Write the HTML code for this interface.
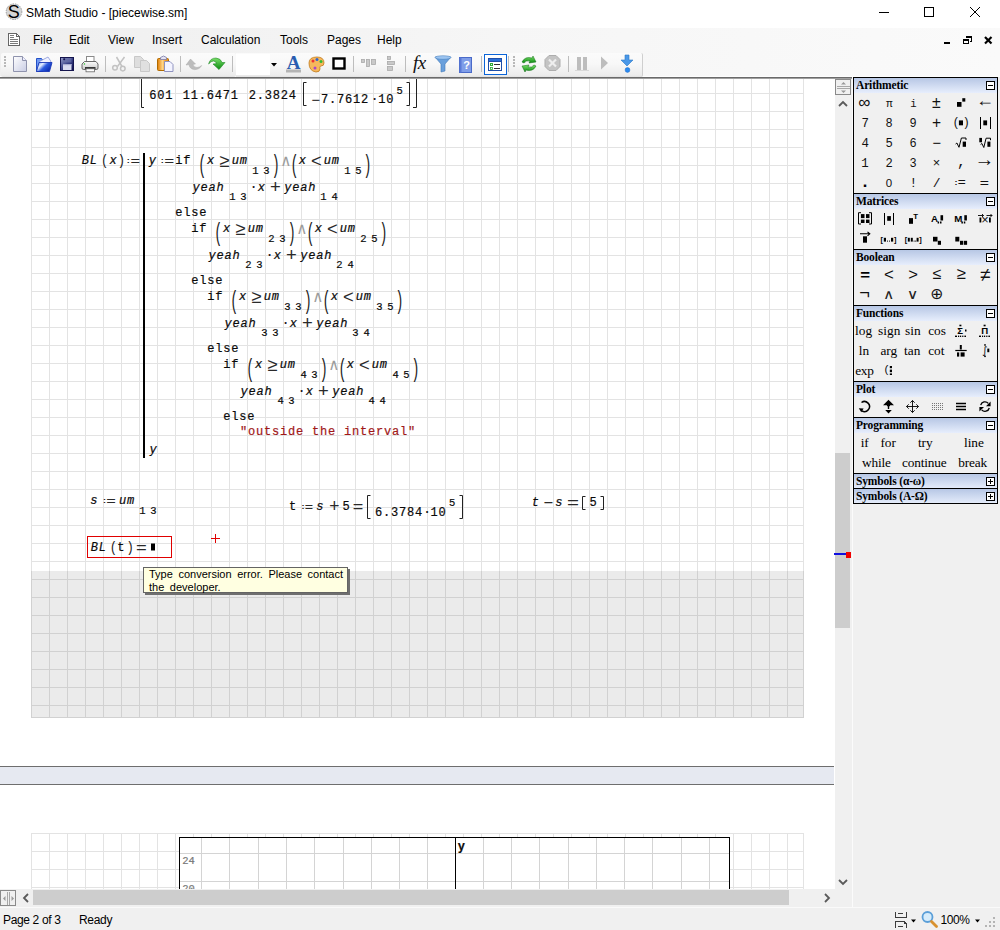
<!DOCTYPE html>
<html><head><meta charset="utf-8"><title>SMath Studio - [piecewise.sm]</title>
<style>
html,body{margin:0;padding:0}
body{width:1000px;height:930px;position:relative;overflow:hidden;background:#fff;font-family:"Liberation Sans",sans-serif;font-size:12px;color:#000}
.a{position:absolute}
.t{position:absolute;white-space:pre;line-height:16px}
svg{position:absolute;left:0;top:0;overflow:visible}
.m{font-family:"Liberation Mono",monospace;font-size:13.33px}
.mi{font-family:"Liberation Mono",monospace;font-size:13.33px;font-style:italic}
.s{font-family:"Liberation Mono",monospace;font-size:10px}
.hd{font-family:"Liberation Serif",serif;font-weight:bold;font-size:11px}
.fn{font-family:"Liberation Serif",serif;font-size:13.33px}
</style></head><body>
<div class="a" id="titlebar" style="left:0;top:0;width:1000px;height:28px;background:#fff"></div>
<svg width="28" height="28"><circle cx="14" cy="11.700" r="7.800" fill="#d6d6d6" stroke="#9a9a9a" stroke-width="1" stroke-dasharray="1.500 1"/><text x="13.800" y="18.400" text-anchor="middle" font-family="Liberation Sans,sans-serif" font-size="18" fill="#000">S</text></svg>
<div class="t" style="left:26px;top:5px;font-size:12px;line-height:16px">SMath Studio - [piecewise.sm]</div>
<svg width="1000" height="28"><g stroke="#000" stroke-width="1" fill="none" shape-rendering="crispEdges"><line x1="879" y1="12.500" x2="889" y2="12.500"/><rect x="924.500" y="7.500" width="9" height="9"/></g><g stroke="#000" stroke-width="1"><line x1="970" y1="7" x2="980" y2="17"/><line x1="980" y1="7" x2="970" y2="17"/></g></svg>
<div class="a" id="menubar" style="left:0;top:28px;width:1000px;height:49px;background:linear-gradient(to right,#efefef,#f6f6f6 50%,#fafafa)"></div>
<svg width="30" height="24" style="top:28px"><g shape-rendering="crispEdges" fill="#fff" stroke="#666" stroke-width="1"><path d="M8.500 5.500h8l3 3v9h-11z"/><path d="M16.500 5.500v3h3" fill="none"/></g><g stroke="#7a7a7a" shape-rendering="crispEdges"><line x1="10" y1="7.500" x2="14" y2="7.500"/><line x1="10" y1="9.500" x2="14" y2="9.500"/><line x1="10" y1="11.500" x2="18" y2="11.500"/><line x1="10" y1="13.500" x2="18" y2="13.500"/><line x1="10" y1="15.500" x2="18" y2="15.500"/></g></svg>
<div class="t" style="left:33px;top:32px">File</div>
<div class="t" style="left:69px;top:32px">Edit</div>
<div class="t" style="left:108px;top:32px">View</div>
<div class="t" style="left:152px;top:32px">Insert</div>
<div class="t" style="left:201px;top:32px">Calculation</div>
<div class="t" style="left:280px;top:32px">Tools</div>
<div class="t" style="left:327px;top:32px">Pages</div>
<div class="t" style="left:377px;top:32px">Help</div>
<svg width="1000" height="24" style="top:28px"><g fill="#000" shape-rendering="crispEdges"><rect x="944" y="14" width="6" height="2"/></g>
<g fill="none" stroke="#000" shape-rendering="crispEdges"><path d="M966.500 10V8.500h5v4.500H970"/><line x1="966" y1="8.500" x2="972" y2="8.500" stroke-width="2"/><rect x="963.500" y="11.500" width="5" height="4"/><line x1="963" y1="11.500" x2="969" y2="11.500" stroke-width="2"/></g>
<g stroke="#000" stroke-width="2.200"><line x1="985" y1="9" x2="991.500" y2="15.500"/><line x1="991.500" y1="9" x2="985" y2="15.500"/></g></svg>
<div class="a" id="toolbar" style="left:0;top:76px;width:1000px;height:1px;background:#fdfdfd"></div>
<div class="a" style="left:1px;top:53px;width:235px;height:24px;background:linear-gradient(#fbfbfb,#f8f8f8 45%,#ececec 92%,#e2e2e2);border-radius:2px"></div>
<div class="a" style="left:236px;top:53px;width:274px;height:24px;background:linear-gradient(#fbfbfb,#f8f8f8 45%,#ececec 92%,#e2e2e2)"></div>
<div class="a" style="left:510px;top:53px;width:132px;height:24px;background:linear-gradient(#fbfbfb,#f8f8f8 45%,#ececec 92%,#e2e2e2);border-right:1px solid #cfcfcf;border-radius:0 2px 2px 0"></div>
<div class="a" style="left:236px;top:54px;width:34px;height:21px;background:#fff"></div>
<svg width="1000" height="26" style="top:51px">
<rect x="4" y="5" width="2" height="2" fill="#b8b8b8"/><rect x="4" y="8" width="2" height="2" fill="#b8b8b8"/><rect x="4" y="11" width="2" height="2" fill="#b8b8b8"/><rect x="4" y="14" width="2" height="2" fill="#b8b8b8"/><rect x="513" y="5" width="2" height="2" fill="#b8b8b8"/><rect x="513" y="8" width="2" height="2" fill="#b8b8b8"/><rect x="513" y="11" width="2" height="2" fill="#b8b8b8"/><rect x="513" y="14" width="2" height="2" fill="#b8b8b8"/>
<line x1="105.5" y1="5" x2="105.5" y2="21" stroke="#bdbdbd" shape-rendering="crispEdges"/><line x1="180.5" y1="5" x2="180.5" y2="21" stroke="#bdbdbd" shape-rendering="crispEdges"/><line x1="232.5" y1="5" x2="232.5" y2="21" stroke="#bdbdbd" shape-rendering="crispEdges"/><line x1="353.5" y1="5" x2="353.5" y2="21" stroke="#bdbdbd" shape-rendering="crispEdges"/><line x1="405.5" y1="5" x2="405.5" y2="21" stroke="#bdbdbd" shape-rendering="crispEdges"/><line x1="481.5" y1="5" x2="481.5" y2="21" stroke="#bdbdbd" shape-rendering="crispEdges"/><line x1="508.5" y1="5" x2="508.5" y2="21" stroke="#bdbdbd" shape-rendering="crispEdges"/><line x1="568.5" y1="5" x2="568.5" y2="21" stroke="#bdbdbd" shape-rendering="crispEdges"/>
<defs><linearGradient id="gdoc" x1="0" y1="0" x2="1" y2="1"><stop offset="0" stop-color="#fff"/><stop offset="1" stop-color="#c9cde4"/></linearGradient><linearGradient id="gblue" x1="0" y1="0" x2="0" y2="1"><stop offset="0" stop-color="#a9cbff"/><stop offset="1" stop-color="#1448c8"/></linearGradient><linearGradient id="gor" x1="0" y1="0" x2="0" y2="1"><stop offset="0" stop-color="#ffd27a"/><stop offset="1" stop-color="#e07a00"/></linearGradient><linearGradient id="ggr" x1="0" y1="0" x2="0" y2="1"><stop offset="0" stop-color="#7be06a"/><stop offset="1" stop-color="#0a8a10"/></linearGradient></defs>
<path d="M13.5 5.5h9l4 4v11h-13z" fill="url(#gdoc)" stroke="#8f93ad"/><path d="M22.5 5.5v4h4" fill="#eef" stroke="#8f93ad"/>
<defs><linearGradient id="gfl" x1="0" y1="0" x2="1" y2="0.6"><stop offset="0" stop-color="#5f8df0"/><stop offset="0.35" stop-color="#e6efff"/><stop offset="0.6" stop-color="#2a5ae0"/><stop offset="1" stop-color="#0c2cb0"/></linearGradient><linearGradient id="gsv" x1="0" y1="0" x2="1" y2="1"><stop offset="0" stop-color="#9aa2cc"/><stop offset="0.5" stop-color="#3a4288"/><stop offset="1" stop-color="#0c0c48"/></linearGradient><linearGradient id="gpr" x1="0" y1="0" x2="0" y2="1"><stop offset="0" stop-color="#fdfdfd"/><stop offset="1" stop-color="#c9c9c9"/></linearGradient></defs><path d="M36.500 7.500h5l1.500 2v11h-6.500z" fill="#6f9af2" stroke="#2450c8"/><path d="M39.500 10.500l8.500-4.500 3 4.500-9 6z" fill="#f0f2ff" stroke="#8a98d8" stroke-width=".8"/><path d="M39 11.500h13l-2.500 9h-13z" fill="url(#gfl)" stroke="#1838b8" stroke-width=".9"/>
<rect x="60.500" y="6.500" width="13" height="13" fill="url(#gsv)" stroke="#15154e"/><rect x="63" y="7" width="8.500" height="4.500" fill="#6a72aa" opacity=".75"/><circle cx="64.200" cy="8.300" r="1" fill="#15154e"/><rect x="63" y="13" width="8.500" height="6" fill="#d9dbf0"/><rect x="63" y="13" width="8.500" height="1.200" fill="#a8acd0"/>
<rect x="86.500" y="5.500" width="7.500" height="6" fill="#fff" stroke="#8a8a8a"/><path d="M84.500 10.500h11.500l2 2.500v4q0 1.500-1.500 1.500h-13q-1.500 0-1.500-1.500v-4z" fill="url(#gpr)" stroke="#5a5a5a" stroke-width=".9"/><rect x="85" y="16.200" width="10.500" height="1.600" fill="#111"/><rect x="86" y="17.800" width="8.500" height="3" fill="#fff" stroke="#666" stroke-width=".8"/><rect x="83.800" y="12.300" width="1.300" height="1.300" fill="#2fbf2f"/>
<g stroke="#c2c2c2" stroke-width="1.500" fill="none"><line x1="116.500" y1="6" x2="122" y2="15.500"/><line x1="124.500" y1="6" x2="117.500" y2="15.500"/><circle cx="115" cy="16.800" r="2.300"/><circle cx="122.800" cy="17.600" r="2.300"/></g>
<path d="M134.500 5.500h6l3 3v8h-9z" fill="#dedede" stroke="#c8c8c8"/><path d="M140.500 9.500h6l3 3v8h-9z" fill="#e0e0e0" stroke="#c8c8c8"/>
<defs><linearGradient id="gps" x1="0" y1="0" x2="1" y2="0"><stop offset="0" stop-color="#e07c00"/><stop offset="0.45" stop-color="#ffd58a"/><stop offset="0.7" stop-color="#f2a02c"/><stop offset="1" stop-color="#e88a10"/></linearGradient></defs><rect x="157.500" y="7.500" width="11" height="12" rx="1" fill="url(#gps)" stroke="#b06a00"/><path d="M160.500 8.500v-2q3-3 6 0v2z" fill="#e4e4f2" stroke="#7a7aa8" stroke-width=".8"/><path d="M164.500 10.500h5.500l3 3v7h-8.500z" fill="#f3f3ff" stroke="#8f93c0"/>
<path d="M190.500 8L195.500 13L193 13.300Q193.500 16.500 197 16.500Q199.500 16.300 201.700 14.500Q199.500 18.600 194.500 18.600Q189.500 18 189 13.600L186 14Z" fill="#bcbcbc" stroke="#a8a8a8" stroke-width=".5"/>
<path d="M208.600 13Q210 7 216 7Q221 7.500 222 11.500L225 11.500L219 18.600L213 13L216.600 12.600Q215.500 10 213.500 10Q211 10 208.600 13Z" fill="url(#ggr)" stroke="#0a7a10" stroke-width=".5"/>
<path d="M271 12h6l-3 3.500z" fill="#000"/>
<text x="293.500" y="17.500" text-anchor="middle" font-family="Liberation Serif,serif" font-weight="bold" font-size="19" fill="#2a5db0">A</text><rect x="286" y="18.500" width="15" height="3" fill="#b4b4b4"/>
<path d="M309 12q0-6 8-6q7 0 7 6q0 3-3 3q-2 0-1 3q0 3-4 3q-7-1-7-9z" fill="#f6b85c" stroke="#c07818" stroke-width=".8"/><circle cx="313" cy="10" r="1.500" fill="#e33"/><circle cx="317" cy="8.500" r="1.500" fill="#36c"/><circle cx="321" cy="10.500" r="1.500" fill="#3b3"/><circle cx="315" cy="17" r="1.500" fill="#a4c"/>
<rect x="333.500" y="7.500" width="11" height="10" fill="#fff" stroke="#000" stroke-width="2.400"/>
<g fill="#c9c9c9" stroke="#aaa" stroke-width=".8"><rect x="361.500" y="8.500" width="3" height="3"/><rect x="366.500" y="8.500" width="3" height="7"/><rect x="371.500" y="8.500" width="4" height="5"/><rect x="387.500" y="5.500" width="3" height="3"/><rect x="387.500" y="10.500" width="7" height="3"/><rect x="387.500" y="15.500" width="5" height="4"/></g>
<text x="413" y="18" font-family="Liberation Serif,serif" font-style="italic" font-size="19" fill="#111" letter-spacing="-0.500">fx</text>
<path d="M435 6h16l-6 7v7l-4 1v-8z" fill="#6aa0dc" stroke="#3f78b8" stroke-width=".6"/><ellipse cx="443" cy="6.500" rx="8" ry="1.800" fill="#9cc4f0" stroke="#3f78b8" stroke-width=".5"/>
<rect x="459.500" y="6.500" width="12" height="15" fill="#7f9de8" stroke="#4a6ac8"/><rect x="459.500" y="6.500" width="2" height="15" fill="#5a7ad8"/><text x="466.500" y="18" text-anchor="middle" font-family="Liberation Sans,sans-serif" font-weight="bold" font-size="11" fill="#fff">?</text>
<rect x="484.500" y="3.500" width="22" height="20" fill="#fff" stroke="#0a64d8" stroke-width="1"/><rect x="488.500" y="7.500" width="13" height="12" fill="#fff" stroke="#1f4fa8"/><rect x="488.500" y="7.500" width="13" height="3" fill="#2a6fd8" stroke="#1f4fa8"/><rect x="490.500" y="12.500" width="2" height="2" fill="#cfe" stroke="#3a3"/><rect x="490.500" y="16.500" width="2" height="2" fill="#cfe" stroke="#3a3" stroke-width=".8"/><line x1="494" y1="13.500" x2="500" y2="13.500" stroke="#333"/><line x1="494" y1="17.500" x2="500" y2="17.500" stroke="#333"/>
<g fill="url(#ggr)" stroke="#0a6a10" stroke-width=".5"><path d="M522 11q3-6 10-4l1-2 3 6-7 1 1-2q-4-1-6 2z"/><path d="M536 15q-3 6-10 4l-1 2-3-6 7-1-1 2q4 1 6-2z"/></g>
<path d="M549 4.500h7l4 4v7l-4 4h-7l-4-4v-7z" fill="#c4c4c4" stroke="#adadad"/><g stroke="#eee" stroke-width="2.200"><line x1="549" y1="8.500" x2="556" y2="15.500"/><line x1="556" y1="8.500" x2="549" y2="15.500"/></g>
<rect x="577" y="6" width="4" height="13" fill="#bdbdbd"/><rect x="583" y="6" width="4" height="13" fill="#bdbdbd"/><rect x="575" y="19" width="14" height="1" fill="#d8d8d8"/>
<path d="M601 5.500l7 6.500-7 6.500z" fill="#bdbdbd"/>
<path d="M625 4h4v5h4l-6 6-6-6h4z" fill="#4a98e8" stroke="#2a78c8" stroke-width=".6"/><circle cx="627.500" cy="19" r="2.400" fill="#2a8af0" stroke="#1a68c8" stroke-width=".5"/>
</svg>
<div class="a" style="left:0;top:77px;width:852px;height:1px;background:#6a6a6a"></div><div class="a" style="left:0;top:78px;width:852px;height:1px;background:#a0a0a0"></div>
<div class="a" id="sheet" style="left:0;top:79px;width:835px;height:810px;background:#fff;overflow:hidden">
<div class="a" style="left:31px;top:0;width:772px;height:638px;background-image:linear-gradient(to right,#e3e3e3 1px,transparent 1px),linear-gradient(to bottom,#e3e3e3 1px,transparent 1px);background-size:18px 18px;background-position:0 14px;border-right:1px solid #e3e3e3;border-bottom:1px solid #e3e3e3"></div>
<div class="a" style="left:31px;top:754px;width:772px;height:60px;background-image:linear-gradient(to right,#e3e3e3 1px,transparent 1px),linear-gradient(to bottom,#e3e3e3 1px,transparent 1px);background-size:18px 18px;background-position:0 0;border-right:1px solid #e3e3e3"></div>
<div class="a" style="left:0;top:687px;width:834px;height:17px;background:#e6e9f1;border-top:1px solid #6e6e6e;border-bottom:1px solid #6e6e6e"></div>
<div class="a" style="left:179px;top:758px;width:549px;height:60px;background:#fff;border:1px solid #000;border-width:1px 1px 0 1px"></div>
<svg width="835" height="810" viewBox="0 79 835 810" font-family="Liberation Mono,DejaVu Sans Mono,monospace" fill="#0a0a0a">
<path d="M201.5 838V890M229.5 838V890M258.5 838V890M286.5 838V890M314.5 838V890M343.5 838V890M371.5 838V890M399.5 838V890M427.5 838V890M483.5 838V890M511.5 838V890M539.5 838V890M568.5 838V890M596.5 838V890M624.5 838V890M652.5 838V890M681.5 838V890M709.5 838V890M180 853.5H729M180 881.5H729" stroke="#d4d4d4" fill="none" shape-rendering="crispEdges"/>
<path d="M455.5 838V890" stroke="#000" shape-rendering="crispEdges"/><path d="M179.5 837V890M729.5 837V890M179 837.5H730" stroke="#000" shape-rendering="crispEdges"/>
<text x="457.80" y="850" font-size="12.0" letter-spacing="0.80" stroke="#0a0a0a" stroke-width="0.2" font-weight="bold">y</text>
<text x="182.25" y="864" font-size="10.5" fill="#777" stroke="#777" stroke-width="0.2">24</text><text x="182.25" y="892" font-size="10.5" fill="#777" stroke="#777" stroke-width="0.2">20</text>
<path d="M141.5 79V107.5H144" fill="none" stroke="#222"/><path d="M416.5 79V107.5H413" fill="none" stroke="#222"/>
<text x="149.25" y="98.5" font-size="12.0" letter-spacing="0.80" stroke="#0a0a0a" stroke-width="0.2">601</text><text x="182.75" y="98.5" font-size="12.0" letter-spacing="0.80" stroke="#0a0a0a" stroke-width="0.2">11.6471</text><text x="248.75" y="98.5" font-size="12.0" letter-spacing="0.80" stroke="#0a0a0a" stroke-width="0.2">2.3824</text>
<path d="M306.5 82.5H303.5V105.5H306.5" fill="none" stroke="#222" stroke-width="1"/><path d="M406.5 82.5H409.5V105.5H406.5" fill="none" stroke="#222" stroke-width="1"/><text x="311.46" y="104.50" font-family="Liberation Sans,sans-serif" font-size="14.77" fill="#2a2a2a">−</text><text x="321.00" y="103" font-size="12.0" letter-spacing="0.80" stroke="#0a0a0a" stroke-width="0.2">7.7612</text><text x="371.00" y="103" font-size="12.0" letter-spacing="0.80" stroke="#0a0a0a" stroke-width="0.2">·</text><text x="378.25" y="103" font-size="12.0" letter-spacing="0.80" stroke="#0a0a0a" stroke-width="0.2">10</text><text x="396.55" y="94" font-size="10.5" stroke="#0a0a0a" stroke-width="0.2">5</text>
<text x="81.75" y="164" font-size="12.0" letter-spacing="0.80" font-style="italic" stroke="#0a0a0a" stroke-width="0.2">BL</text><text transform="translate(100.97 164.61) scale(1.015 1.156)" font-size="12.0" fill="#1a1a1a">(</text><text x="109.50" y="164" font-size="12.0" letter-spacing="0.80" font-style="italic" stroke="#0a0a0a" stroke-width="0.2">x</text><text transform="translate(117.67 164.61) scale(1.015 1.156)" font-size="12.0" fill="#1a1a1a">)</text><text transform="translate(126.80 162.95) scale(1 0.8)" font-family="Liberation Sans,sans-serif" font-weight="bold" font-size="9" fill="#111">:</text><text transform="translate(130.48 165.16) scale(1 0.78)" font-family="Liberation Sans,sans-serif" font-size="16.41" fill="#2a2a2a">=</text>
<rect x="143" y="153" width="2" height="305" fill="#000" shape-rendering="crispEdges"/>
<text x="148.80" y="164" font-size="12.0" letter-spacing="0.80" font-style="italic" stroke="#0a0a0a" stroke-width="0.2">y</text><text transform="translate(160.80 162.95) scale(1 0.8)" font-family="Liberation Sans,sans-serif" font-weight="bold" font-size="9" fill="#111">:</text><text transform="translate(164.15 165.32) scale(1 0.78)" font-family="Liberation Sans,sans-serif" font-size="17.03" fill="#2a2a2a">=</text>
<text x="175.25" y="164" font-size="12.0" letter-spacing="0.80" stroke="#0a0a0a" stroke-width="0.2">if</text><text transform="translate(198.28 172.51) scale(1.108 2.116)" font-size="12.0" fill="#1a1a1a">(</text><text x="207.00" y="164.3" font-size="12.0" letter-spacing="0.80" font-style="italic" stroke="#0a0a0a" stroke-width="0.2">x</text><text x="219.34" y="166.52" font-family="Liberation Sans,sans-serif" font-size="18.40" fill="#2a2a2a">≥</text><text x="231.65" y="164.3" font-size="12.0" letter-spacing="0.80" font-style="italic" stroke="#0a0a0a" stroke-width="0.2">um</text><text x="252.25" y="173.5" font-size="10.5" stroke="#0a0a0a" stroke-width="0.2">1</text><text x="263.25" y="173.5" font-size="10.5" stroke="#0a0a0a" stroke-width="0.2">3</text><text transform="translate(271.78 172.51) scale(1.108 2.116)" font-size="12.0" fill="#1a1a1a">)</text><text x="280.95" y="165.90" font-family="DejaVu Sans Mono,monospace" font-size="16.17" fill="#9c9c9c">∧</text><text transform="translate(290.58 172.51) scale(1.108 2.116)" font-size="12.0" fill="#1a1a1a">(</text><text x="298.80" y="164.3" font-size="12.0" letter-spacing="0.80" font-style="italic" stroke="#0a0a0a" stroke-width="0.2">x</text><text x="310.88" y="167.22" font-family="Liberation Sans,sans-serif" font-size="18.46" fill="#2a2a2a">&lt;</text><text x="323.75" y="164.3" font-size="12.0" letter-spacing="0.80" font-style="italic" stroke="#0a0a0a" stroke-width="0.2">um</text><text x="344.25" y="173.5" font-size="10.5" stroke="#0a0a0a" stroke-width="0.2">1</text><text x="355.25" y="173.5" font-size="10.5" stroke="#0a0a0a" stroke-width="0.2">5</text><text transform="translate(363.58 172.51) scale(1.108 2.116)" font-size="12.0" fill="#1a1a1a">)</text>
<text x="192.60" y="191" font-size="12.0" letter-spacing="0.80" font-style="italic" stroke="#0a0a0a" stroke-width="0.2">yeah</text><text x="229.25" y="199.7" font-size="10.5" stroke="#0a0a0a" stroke-width="0.2">1</text><text x="240.25" y="199.7" font-size="10.5" stroke="#0a0a0a" stroke-width="0.2">3</text><text x="250.00" y="191" font-size="12.0" letter-spacing="0.80" stroke="#0a0a0a" stroke-width="0.2">·</text><text x="257.70" y="191" font-size="12.0" letter-spacing="0.80" font-style="italic" stroke="#0a0a0a" stroke-width="0.2">x</text><text x="270.08" y="193.20" font-family="Liberation Sans,sans-serif" font-size="18.46" fill="#2a2a2a">+</text><text x="284.20" y="191" font-size="12.0" letter-spacing="0.80" font-style="italic" stroke="#0a0a0a" stroke-width="0.2">yeah</text><text x="320.25" y="199.7" font-size="10.5" stroke="#0a0a0a" stroke-width="0.2">1</text><text x="331.50" y="199.7" font-size="10.5" stroke="#0a0a0a" stroke-width="0.2">4</text>
<text x="175.25" y="215.6" font-size="12.0" letter-spacing="0.80" stroke="#0a0a0a" stroke-width="0.2">else</text>
<text x="191.25" y="232" font-size="12.0" letter-spacing="0.80" stroke="#0a0a0a" stroke-width="0.2">if</text><text transform="translate(214.28 240.51) scale(1.108 2.116)" font-size="12.0" fill="#1a1a1a">(</text><text x="223.00" y="232.3" font-size="12.0" letter-spacing="0.80" font-style="italic" stroke="#0a0a0a" stroke-width="0.2">x</text><text x="235.34" y="234.52" font-family="Liberation Sans,sans-serif" font-size="18.40" fill="#2a2a2a">≥</text><text x="247.65" y="232.3" font-size="12.0" letter-spacing="0.80" font-style="italic" stroke="#0a0a0a" stroke-width="0.2">um</text><text x="268.25" y="241.5" font-size="10.5" stroke="#0a0a0a" stroke-width="0.2">2</text><text x="279.25" y="241.5" font-size="10.5" stroke="#0a0a0a" stroke-width="0.2">3</text><text transform="translate(287.78 240.51) scale(1.108 2.116)" font-size="12.0" fill="#1a1a1a">)</text><text x="296.95" y="233.90" font-family="DejaVu Sans Mono,monospace" font-size="16.17" fill="#9c9c9c">∧</text><text transform="translate(306.58 240.51) scale(1.108 2.116)" font-size="12.0" fill="#1a1a1a">(</text><text x="314.80" y="232.3" font-size="12.0" letter-spacing="0.80" font-style="italic" stroke="#0a0a0a" stroke-width="0.2">x</text><text x="326.88" y="235.22" font-family="Liberation Sans,sans-serif" font-size="18.46" fill="#2a2a2a">&lt;</text><text x="339.75" y="232.3" font-size="12.0" letter-spacing="0.80" font-style="italic" stroke="#0a0a0a" stroke-width="0.2">um</text><text x="360.25" y="241.5" font-size="10.5" stroke="#0a0a0a" stroke-width="0.2">2</text><text x="371.25" y="241.5" font-size="10.5" stroke="#0a0a0a" stroke-width="0.2">5</text><text transform="translate(379.58 240.51) scale(1.108 2.116)" font-size="12.0" fill="#1a1a1a">)</text>
<text x="208.60" y="259" font-size="12.0" letter-spacing="0.80" font-style="italic" stroke="#0a0a0a" stroke-width="0.2">yeah</text><text x="245.25" y="267.7" font-size="10.5" stroke="#0a0a0a" stroke-width="0.2">2</text><text x="256.25" y="267.7" font-size="10.5" stroke="#0a0a0a" stroke-width="0.2">3</text><text x="266.00" y="259" font-size="12.0" letter-spacing="0.80" stroke="#0a0a0a" stroke-width="0.2">·</text><text x="273.70" y="259" font-size="12.0" letter-spacing="0.80" font-style="italic" stroke="#0a0a0a" stroke-width="0.2">x</text><text x="286.08" y="261.20" font-family="Liberation Sans,sans-serif" font-size="18.46" fill="#2a2a2a">+</text><text x="300.20" y="259" font-size="12.0" letter-spacing="0.80" font-style="italic" stroke="#0a0a0a" stroke-width="0.2">yeah</text><text x="336.25" y="267.7" font-size="10.5" stroke="#0a0a0a" stroke-width="0.2">2</text><text x="347.50" y="267.7" font-size="10.5" stroke="#0a0a0a" stroke-width="0.2">4</text>
<text x="191.25" y="283.6" font-size="12.0" letter-spacing="0.80" stroke="#0a0a0a" stroke-width="0.2">else</text>
<text x="207.25" y="300" font-size="12.0" letter-spacing="0.80" stroke="#0a0a0a" stroke-width="0.2">if</text><text transform="translate(230.28 308.51) scale(1.108 2.116)" font-size="12.0" fill="#1a1a1a">(</text><text x="239.00" y="300.3" font-size="12.0" letter-spacing="0.80" font-style="italic" stroke="#0a0a0a" stroke-width="0.2">x</text><text x="251.34" y="302.52" font-family="Liberation Sans,sans-serif" font-size="18.40" fill="#2a2a2a">≥</text><text x="263.65" y="300.3" font-size="12.0" letter-spacing="0.80" font-style="italic" stroke="#0a0a0a" stroke-width="0.2">um</text><text x="284.25" y="309.5" font-size="10.5" stroke="#0a0a0a" stroke-width="0.2">3</text><text x="295.25" y="309.5" font-size="10.5" stroke="#0a0a0a" stroke-width="0.2">3</text><text transform="translate(303.78 308.51) scale(1.108 2.116)" font-size="12.0" fill="#1a1a1a">)</text><text x="312.95" y="301.90" font-family="DejaVu Sans Mono,monospace" font-size="16.17" fill="#9c9c9c">∧</text><text transform="translate(322.58 308.51) scale(1.108 2.116)" font-size="12.0" fill="#1a1a1a">(</text><text x="330.80" y="300.3" font-size="12.0" letter-spacing="0.80" font-style="italic" stroke="#0a0a0a" stroke-width="0.2">x</text><text x="342.88" y="303.22" font-family="Liberation Sans,sans-serif" font-size="18.46" fill="#2a2a2a">&lt;</text><text x="355.75" y="300.3" font-size="12.0" letter-spacing="0.80" font-style="italic" stroke="#0a0a0a" stroke-width="0.2">um</text><text x="376.25" y="309.5" font-size="10.5" stroke="#0a0a0a" stroke-width="0.2">3</text><text x="387.25" y="309.5" font-size="10.5" stroke="#0a0a0a" stroke-width="0.2">5</text><text transform="translate(395.58 308.51) scale(1.108 2.116)" font-size="12.0" fill="#1a1a1a">)</text>
<text x="224.60" y="327" font-size="12.0" letter-spacing="0.80" font-style="italic" stroke="#0a0a0a" stroke-width="0.2">yeah</text><text x="261.25" y="335.7" font-size="10.5" stroke="#0a0a0a" stroke-width="0.2">3</text><text x="272.25" y="335.7" font-size="10.5" stroke="#0a0a0a" stroke-width="0.2">3</text><text x="282.00" y="327" font-size="12.0" letter-spacing="0.80" stroke="#0a0a0a" stroke-width="0.2">·</text><text x="289.70" y="327" font-size="12.0" letter-spacing="0.80" font-style="italic" stroke="#0a0a0a" stroke-width="0.2">x</text><text x="302.08" y="329.20" font-family="Liberation Sans,sans-serif" font-size="18.46" fill="#2a2a2a">+</text><text x="316.20" y="327" font-size="12.0" letter-spacing="0.80" font-style="italic" stroke="#0a0a0a" stroke-width="0.2">yeah</text><text x="352.25" y="335.7" font-size="10.5" stroke="#0a0a0a" stroke-width="0.2">3</text><text x="363.50" y="335.7" font-size="10.5" stroke="#0a0a0a" stroke-width="0.2">4</text>
<text x="207.25" y="351.6" font-size="12.0" letter-spacing="0.80" stroke="#0a0a0a" stroke-width="0.2">else</text>
<text x="223.25" y="368" font-size="12.0" letter-spacing="0.80" stroke="#0a0a0a" stroke-width="0.2">if</text><text transform="translate(246.28 376.51) scale(1.108 2.116)" font-size="12.0" fill="#1a1a1a">(</text><text x="255.00" y="368.3" font-size="12.0" letter-spacing="0.80" font-style="italic" stroke="#0a0a0a" stroke-width="0.2">x</text><text x="267.34" y="370.52" font-family="Liberation Sans,sans-serif" font-size="18.40" fill="#2a2a2a">≥</text><text x="279.65" y="368.3" font-size="12.0" letter-spacing="0.80" font-style="italic" stroke="#0a0a0a" stroke-width="0.2">um</text><text x="300.50" y="377.5" font-size="10.5" stroke="#0a0a0a" stroke-width="0.2">4</text><text x="311.25" y="377.5" font-size="10.5" stroke="#0a0a0a" stroke-width="0.2">3</text><text transform="translate(319.78 376.51) scale(1.108 2.116)" font-size="12.0" fill="#1a1a1a">)</text><text x="328.95" y="369.90" font-family="DejaVu Sans Mono,monospace" font-size="16.17" fill="#9c9c9c">∧</text><text transform="translate(338.58 376.51) scale(1.108 2.116)" font-size="12.0" fill="#1a1a1a">(</text><text x="346.80" y="368.3" font-size="12.0" letter-spacing="0.80" font-style="italic" stroke="#0a0a0a" stroke-width="0.2">x</text><text x="358.88" y="371.22" font-family="Liberation Sans,sans-serif" font-size="18.46" fill="#2a2a2a">&lt;</text><text x="371.75" y="368.3" font-size="12.0" letter-spacing="0.80" font-style="italic" stroke="#0a0a0a" stroke-width="0.2">um</text><text x="392.50" y="377.5" font-size="10.5" stroke="#0a0a0a" stroke-width="0.2">4</text><text x="403.25" y="377.5" font-size="10.5" stroke="#0a0a0a" stroke-width="0.2">5</text><text transform="translate(411.58 376.51) scale(1.108 2.116)" font-size="12.0" fill="#1a1a1a">)</text>
<text x="240.60" y="395" font-size="12.0" letter-spacing="0.80" font-style="italic" stroke="#0a0a0a" stroke-width="0.2">yeah</text><text x="277.50" y="403.7" font-size="10.5" stroke="#0a0a0a" stroke-width="0.2">4</text><text x="288.25" y="403.7" font-size="10.5" stroke="#0a0a0a" stroke-width="0.2">3</text><text x="298.00" y="395" font-size="12.0" letter-spacing="0.80" stroke="#0a0a0a" stroke-width="0.2">·</text><text x="305.70" y="395" font-size="12.0" letter-spacing="0.80" font-style="italic" stroke="#0a0a0a" stroke-width="0.2">x</text><text x="318.08" y="397.20" font-family="Liberation Sans,sans-serif" font-size="18.46" fill="#2a2a2a">+</text><text x="332.20" y="395" font-size="12.0" letter-spacing="0.80" font-style="italic" stroke="#0a0a0a" stroke-width="0.2">yeah</text><text x="368.50" y="403.7" font-size="10.5" stroke="#0a0a0a" stroke-width="0.2">4</text><text x="379.50" y="403.7" font-size="10.5" stroke="#0a0a0a" stroke-width="0.2">4</text>
<text x="223.25" y="419.6" font-size="12.0" letter-spacing="0.80" stroke="#0a0a0a" stroke-width="0.2">else</text>
<text x="240.10" y="435.4" font-size="12.0" letter-spacing="0.80" fill="#a01818" stroke="#a01818" stroke-width="0.2">&quot;outside the interval&quot;</text>
<text x="149.50" y="453" font-size="12.0" letter-spacing="0.80" font-style="italic" stroke="#0a0a0a" stroke-width="0.2">y</text>
<text x="90.25" y="504.4" font-size="12.0" letter-spacing="0.80" font-style="italic" stroke="#0a0a0a" stroke-width="0.2">s</text><text transform="translate(103.00 503.15) scale(1 0.8)" font-family="Liberation Sans,sans-serif" font-weight="bold" font-size="9" fill="#111">:</text><text transform="translate(106.18 505.36) scale(1 0.78)" font-family="Liberation Sans,sans-serif" font-size="16.41" fill="#2a2a2a">=</text><text x="119.05" y="504.4" font-size="12.0" letter-spacing="0.80" font-style="italic" stroke="#0a0a0a" stroke-width="0.2">um</text><text x="139.25" y="513.6" font-size="10.5" stroke="#0a0a0a" stroke-width="0.2">1</text><text x="150.25" y="513.6" font-size="10.5" stroke="#0a0a0a" stroke-width="0.2">3</text>
<text x="289.00" y="510.4" font-size="12.0" letter-spacing="0.80" stroke="#0a0a0a" stroke-width="0.2">t</text><text transform="translate(301.40 509.15) scale(1 0.8)" font-family="Liberation Sans,sans-serif" font-weight="bold" font-size="9" fill="#111">:</text><text transform="translate(304.78 510.84) scale(1 0.78)" font-family="Liberation Sans,sans-serif" font-size="14.36" fill="#2a2a2a">=</text><text x="316.25" y="510.4" font-size="12.0" letter-spacing="0.80" font-style="italic" stroke="#0a0a0a" stroke-width="0.2">s</text><text x="329.13" y="512.47" font-family="Liberation Sans,sans-serif" font-size="17.44" fill="#2a2a2a">+</text><text x="342.55" y="510.4" font-size="12.0" letter-spacing="0.80" stroke="#0a0a0a" stroke-width="0.2">5</text><text transform="translate(352.70 511.78) scale(1 0.78)" font-family="Liberation Sans,sans-serif" font-size="18.05" fill="#2a2a2a">=</text><path d="M370.5 495.5H367.5V518.5H370.5" fill="none" stroke="#222" stroke-width="1"/><path d="M459.5 495.5H462.5V518.5H459.5" fill="none" stroke="#222" stroke-width="1"/><text x="375.05" y="515.6" font-size="12.0" letter-spacing="0.80" stroke="#0a0a0a" stroke-width="0.2">6.3784</text><text x="423.50" y="515.6" font-size="12.0" letter-spacing="0.80" stroke="#0a0a0a" stroke-width="0.2">·</text><text x="430.55" y="515.6" font-size="12.0" letter-spacing="0.80" stroke="#0a0a0a" stroke-width="0.2">10</text><text x="449.05" y="506.4" font-size="10.5" stroke="#0a0a0a" stroke-width="0.2">5</text>
<text x="531.70" y="505.6" font-size="12.0" letter-spacing="0.80" font-style="italic" stroke="#0a0a0a" stroke-width="0.2">t</text><text x="543.58" y="507.93" font-family="Liberation Sans,sans-serif" font-size="16.41" fill="#2a2a2a">−</text><text x="555.25" y="505.6" font-size="12.0" letter-spacing="0.80" font-style="italic" stroke="#0a0a0a" stroke-width="0.2">s</text><text transform="translate(566.97 507.60) scale(1 0.78)" font-family="Liberation Sans,sans-serif" font-size="20.51" fill="#2a2a2a">=</text><path d="M585.5 496.5H582.5V509.5H585.5" fill="none" stroke="#222" stroke-width="1"/><text x="589.55" y="505.6" font-size="12.0" letter-spacing="0.80" stroke="#0a0a0a" stroke-width="0.2">5</text><path d="M600.5 496.5H603.5V509.5H600.5" fill="none" stroke="#222" stroke-width="1"/>
<rect x="87.5" y="536.5" width="84" height="21" fill="none" stroke="#e00000" shape-rendering="crispEdges"/>
<text x="90.75" y="551" font-size="12.0" letter-spacing="0.80" font-style="italic" stroke="#0a0a0a" stroke-width="0.2">BL</text><text transform="translate(109.77 551.61) scale(1.015 1.156)" font-size="12.0" fill="#1a1a1a">(</text><text x="117.20" y="551" font-size="12.0" letter-spacing="0.80" stroke="#0a0a0a" stroke-width="0.2">t</text><text transform="translate(126.57 551.61) scale(1.015 1.156)" font-size="12.0" fill="#1a1a1a">)</text><text transform="translate(136.08 552.68) scale(1 0.78)" font-family="Liberation Sans,sans-serif" font-size="18.46" fill="#2a2a2a">=</text><rect x="151" y="543.5" width="4" height="7" fill="#000"/>
<path d="M211 538.5H220M215.5 534V543" stroke="#e00000" shape-rendering="crispEdges"/>
</svg>
<div class="a" style="left:31px;top:491.5px;width:773px;height:147.5px;background:rgba(0,0,0,0.078)"></div>
<div class="a" style="left:145px;top:490px;width:205px;height:26px;background:#6f6f6f"></div>
<div class="a" style="left:143px;top:488px;width:203px;height:24px;background:#ffffe1;border:1px solid #646464"></div>
<div class="t" style="left:149px;top:489px;font-size:11px;line-height:13px;word-spacing:2.5px;color:#000">Type conversion error. Please contact</div>
<div class="t" style="left:149px;top:502px;font-size:11px;line-height:13px;word-spacing:2.5px;color:#000">the developer.</div>
</div>
<div class="a" style="left:835px;top:79px;width:17px;height:810px;background:#f0f0f0"></div>
<div class="a" style="left:0;top:889px;width:852px;height:18px;background:#f0f0f0"></div>
<div class="a" style="left:852px;top:77px;width:1px;height:831px;background:#fbfbfb"></div>
<div class="a" style="left:835px;top:453px;width:15px;height:175px;background:#cdcdcd"></div>
<div class="a" style="left:33px;top:890px;width:756px;height:15px;background:#cdcdcd"></div>
<div class="a" style="left:834px;top:553px;width:12px;height:1.5px;background:#1010e0"></div><div class="a" style="left:846px;top:552px;width:5px;height:5.5px;background:#f00000"></div>
<svg width="1000" height="930">
<rect x="835.5" y="79.5" width="15" height="15" fill="#f0f0f0" stroke="#8a8a8a" shape-rendering="crispEdges"/><path d="M837 86.500H850M837 88.500H850" stroke="#a8a8a8" shape-rendering="crispEdges"/><path d="M841 84.500l2.500-2.500 2.500 2.500zM841 90.500l2.500 2.500 2.500-2.500z" fill="#999"/>
<g fill="none" stroke="#5a5a5a" stroke-width="1.800"><path d="M839 106l4-4 4 4"/><path d="M839 880l4 4 4-4"/><path d="M28 894l-4 4 4 4"/><path d="M825 894l4 4-4 4"/></g>
<rect x="0.500" y="890.500" width="15" height="15" fill="#f0f0f0" stroke="#8a8a8a" shape-rendering="crispEdges"/><path d="M7.500 892V905M9.500 892V905" stroke="#a8a8a8" shape-rendering="crispEdges"/><path d="M5.500 896l-2.500 2.500 2.500 2.500zM11.500 896l2.500 2.500-2.500 2.500z" fill="#999"/>
</svg>
<div class="a" id="side" style="left:853px;top:77px;width:147px;height:830px;background:#f0f0f0"></div>
<svg width="1000" height="930" font-family="Liberation Mono,DejaVu Sans Mono,monospace">
<defs><linearGradient id="ph" x1="0" y1="0" x2="0" y2="1"><stop offset="0" stop-color="#b7c7e5"/><stop offset="1" stop-color="#e7eefc"/></linearGradient></defs>
<rect x="854" y="78" width="143" height="15" fill="url(#ph)"/><text x="856" y="89" font-family="Liberation Serif,serif" font-weight="bold" font-size="11.500" letter-spacing="-0.150" fill="#000">Arithmetic</text><rect x="986.500" y="81.5" width="8" height="8" fill="#fff" stroke="#000" shape-rendering="crispEdges"/><path d="M988 85.5H993" stroke="#000" shape-rendering="crispEdges"/>
<rect x="854" y="194" width="143" height="15" fill="url(#ph)"/><text x="856" y="205" font-family="Liberation Serif,serif" font-weight="bold" font-size="11.500" letter-spacing="-0.150" fill="#000">Matrices</text><rect x="986.500" y="197.5" width="8" height="8" fill="#fff" stroke="#000" shape-rendering="crispEdges"/><path d="M988 201.5H993" stroke="#000" shape-rendering="crispEdges"/>
<rect x="854" y="250" width="143" height="15" fill="url(#ph)"/><text x="856" y="261" font-family="Liberation Serif,serif" font-weight="bold" font-size="11.500" letter-spacing="-0.150" fill="#000">Boolean</text><rect x="986.500" y="253.5" width="8" height="8" fill="#fff" stroke="#000" shape-rendering="crispEdges"/><path d="M988 257.5H993" stroke="#000" shape-rendering="crispEdges"/>
<rect x="854" y="306" width="143" height="15" fill="url(#ph)"/><text x="856" y="317" font-family="Liberation Serif,serif" font-weight="bold" font-size="11.500" letter-spacing="-0.150" fill="#000">Functions</text><rect x="986.500" y="309.5" width="8" height="8" fill="#fff" stroke="#000" shape-rendering="crispEdges"/><path d="M988 313.5H993" stroke="#000" shape-rendering="crispEdges"/>
<rect x="854" y="382" width="143" height="15" fill="url(#ph)"/><text x="856" y="393" font-family="Liberation Serif,serif" font-weight="bold" font-size="11.500" letter-spacing="-0.150" fill="#000">Plot</text><rect x="986.500" y="385.5" width="8" height="8" fill="#fff" stroke="#000" shape-rendering="crispEdges"/><path d="M988 389.5H993" stroke="#000" shape-rendering="crispEdges"/>
<rect x="854" y="418" width="143" height="15" fill="url(#ph)"/><text x="856" y="429" font-family="Liberation Serif,serif" font-weight="bold" font-size="11.500" letter-spacing="-0.150" fill="#000">Programming</text><rect x="986.500" y="421.5" width="8" height="8" fill="#fff" stroke="#000" shape-rendering="crispEdges"/><path d="M988 425.5H993" stroke="#000" shape-rendering="crispEdges"/>
<rect x="854" y="474" width="143" height="15" fill="url(#ph)"/><text x="856" y="485" font-family="Liberation Serif,serif" font-weight="bold" font-size="11.500" letter-spacing="-0.150" fill="#000">Symbols (α-ω)</text><rect x="986.500" y="477.5" width="8" height="8" fill="#fff" stroke="#000" shape-rendering="crispEdges"/><path d="M988 481.5H993" stroke="#000" shape-rendering="crispEdges"/><path d="M990.500 479V484" stroke="#000" shape-rendering="crispEdges"/>
<rect x="854" y="489" width="143" height="15" fill="url(#ph)"/><text x="856" y="500" font-family="Liberation Serif,serif" font-weight="bold" font-size="11.500" letter-spacing="-0.150" fill="#000">Symbols (Α-Ω)</text><rect x="986.500" y="492.5" width="8" height="8" fill="#fff" stroke="#000" shape-rendering="crispEdges"/><path d="M988 496.5H993" stroke="#000" shape-rendering="crispEdges"/><path d="M990.500 494V499" stroke="#000" shape-rendering="crispEdges"/>
<path d="M853.500 77V503.500M997.500 77V503.500M853 77.500H998M853 193.500H998M853 249.500H998M853 305.500H998M853 381.500H998M853 417.500H998M853 473.500H998M853 488.500H998M853 503.500H998" stroke="#000" fill="none" shape-rendering="crispEdges"/>
<text x="861.39" y="126.80" font-family="Liberation Mono,monospace" font-size="12.38" fill="#111">7</text><text x="885.52" y="126.65" font-family="Liberation Mono,monospace" font-size="11.93" fill="#111">8</text><text x="909.52" y="126.65" font-family="Liberation Mono,monospace" font-size="11.93" fill="#111">9</text><text x="861.39" y="146.80" font-family="Liberation Mono,monospace" font-size="12.38" fill="#111">4</text><text x="885.46" y="146.65" font-family="Liberation Mono,monospace" font-size="12.15" fill="#111">5</text><text x="909.45" y="146.65" font-family="Liberation Mono,monospace" font-size="11.93" fill="#111">6</text><text x="861.23" y="166.80" font-family="Liberation Mono,monospace" font-size="12.38" fill="#111">1</text><text x="885.46" y="166.80" font-family="Liberation Mono,monospace" font-size="12.15" fill="#111">2</text><text x="909.52" y="166.65" font-family="Liberation Mono,monospace" font-size="11.93" fill="#111">3</text><text x="885.74" y="186.66" font-family="Liberation Sans,sans-serif" font-size="11.51" fill="#111">0</text>
<text x="858.25" y="107.66" font-family="Liberation Sans,sans-serif" font-size="17.25" fill="#111">∞</text><text x="886.02" y="106.66" font-family="Liberation Mono,monospace" font-size="11.16" fill="#111">π</text><text x="910.15" y="106.80" font-family="Liberation Mono,monospace" font-size="10.62" fill="#111">i</text><text x="932.11" y="107.64" font-family="Liberation Sans,sans-serif" font-size="15.80" fill="#111">±</text><rect x="957" y="102" width="4.5" height="4.8" fill="#000"/><rect x="962.3" y="98.2" width="3" height="3.4" fill="#000"/><text x="976.00" y="105.74" font-family="Liberation Sans,sans-serif" font-size="18.00" fill="#111">←</text><text x="932.02" y="127.77" font-family="Liberation Sans,sans-serif" font-size="15.59" fill="#111">+</text><text x="953.82" y="126.09" font-family="Liberation Sans,sans-serif" font-size="12.27" fill="#111">(</text><rect x="958.9" y="120.4" width="4.1" height="4.9" fill="#000"/><text x="964.44" y="126.09" font-family="Liberation Sans,sans-serif" font-size="12.27" fill="#111">)</text><path d="M980.500 117V129M990.500 117V129" stroke="#000" shape-rendering="crispEdges"/><rect x="983.3" y="120.4" width="3.8" height="4.9" fill="#000"/><text x="932.46" y="147.60" font-family="Liberation Sans,sans-serif" font-size="14.77" fill="#111">−</text><path d="M955.600 144l1.300-1 2.100 4.300 2.400-9.300h4.600v2" fill="none" stroke="#000" stroke-width="1"/><rect x="962.7" y="141.6" width="3.3" height="5.2" fill="#000"/><rect x="979.3" y="137.9" width="2.7" height="4.4" fill="#000"/><path d="M980.600 144.500l1.300-1 1.900 4 2.300-9.300h4.400v2" fill="none" stroke="#000" stroke-width="1"/><rect x="987.4" y="141.6" width="3" height="5.2" fill="#000"/><text x="932.84" y="166.74" font-family="Liberation Sans,sans-serif" font-size="12.80" fill="#111">×</text><text x="956.98" y="166.02" font-family="Liberation Mono,monospace" font-size="14.77" fill="#111">,</text><text x="974.53" y="166.05" font-family="Liberation Sans,sans-serif" font-size="19.83" fill="#111">→</text><text x="860.05" y="186.80" font-family="Liberation Mono,monospace" font-weight="bold" font-size="16.67" fill="#000">.</text><text x="909.55" y="186.80" font-family="Liberation Mono,monospace" font-size="12.83" fill="#111">!</text><text x="932.69" y="187.34" font-family="Liberation Mono,monospace" font-size="13.02" fill="#111">/</text><text transform="translate(954.6 184.55) scale(1 0.8)" font-family="Liberation Sans,sans-serif" font-weight="bold" font-size="9" fill="#111">:</text><text transform="translate(957.81 186.17) scale(1 0.8)" font-family="Liberation Sans,sans-serif" font-size="13.74" fill="#111">=</text><text transform="translate(979.71 186.71) scale(1 0.8)" font-family="Liberation Sans,sans-serif" font-size="15.79" fill="#111">=</text>
<path d="M861 212.700H858.500V224H861M869 212.700H871.500V224H869" fill="none" stroke="#000"/><rect x="860.9" y="214.1" width="3.6" height="4" fill="#000"/><rect x="866" y="214.1" width="3.5" height="4" fill="#000"/><rect x="860.9" y="219.6" width="3.6" height="3.4" fill="#000"/><rect x="866" y="219.6" width="3.5" height="3.4" fill="#000"/><path d="M884.500 213V225M893.500 213V225" stroke="#000" shape-rendering="crispEdges"/><rect x="887.2" y="216.1" width="3.7" height="4.7" fill="#000"/><rect x="909" y="218.1" width="4" height="5.7" fill="#000"/><text x="913.30" y="219.00" font-family="Liberation Sans,sans-serif" font-weight="bold" font-size="7.83" fill="#000">T</text><text x="930.97" y="221.50" font-family="Liberation Sans,sans-serif" font-weight="bold" font-size="9.75" fill="#000">A</text><rect x="940.5" y="215.2" width="2.6" height="5.3" fill="#000"/><rect x="937.6" y="221.5" width="1.5" height="2" fill="#000"/><rect x="940" y="221.5" width="1.5" height="2" fill="#000"/><text x="954.18" y="221.50" font-family="Liberation Sans,sans-serif" font-weight="bold" font-size="9.75" fill="#000">M</text><rect x="964.3" y="215.2" width="2.6" height="5.3" fill="#000"/><rect x="961.4" y="221.5" width="1.5" height="2" fill="#000"/><rect x="963.8" y="221.5" width="1.5" height="2" fill="#000"/><text x="981.24" y="224.24" font-family="Liberation Sans,sans-serif" font-size="12.80" fill="#111">×</text><rect x="979.5" y="217.5" width="1.8" height="5" fill="#000"/><rect x="989" y="217.5" width="1.8" height="5" fill="#000"/><path d="M978 215.500H983.500M986.500 215.500H992M982 214l1.500 1.500-1.500 1.500M990.500 214l1.500 1.500-1.500 1.500" stroke="#000" fill="none" stroke-width=".9"/><path d="M860 233.800H870M867.500 231.800l2.300 2-2.300 2" stroke="#000" fill="none" stroke-width="1.100"/><rect x="863" y="236.3" width="4" height="6.4" fill="#000"/><text x="880.62" y="241.64" font-family="Liberation Sans,sans-serif" font-weight="bold" font-size="7.36" fill="#000">[</text><rect x="883.8" y="237.8" width="2.2" height="3.8" fill="#000"/><rect x="891" y="237.8" width="2.2" height="3.8" fill="#000"/><rect x="887" y="240.6" width="1" height="1" fill="#000"/><rect x="889" y="240.6" width="1" height="1" fill="#000"/><text x="893.94" y="241.64" font-family="Liberation Sans,sans-serif" font-weight="bold" font-size="7.36" fill="#000">]</text><text x="904.72" y="241.64" font-family="Liberation Sans,sans-serif" font-weight="bold" font-size="7.36" fill="#000">[</text><rect x="907.8" y="237.8" width="2" height="3.8" fill="#000"/><rect x="910.8" y="237.8" width="2" height="3.8" fill="#000"/><rect x="916.6" y="237.8" width="2" height="3.8" fill="#000"/><rect x="913.6" y="240.6" width="1" height="1" fill="#000"/><rect x="915.2" y="240.6" width="1" height="1" fill="#000"/><text x="919.24" y="241.64" font-family="Liberation Sans,sans-serif" font-weight="bold" font-size="7.36" fill="#000">]</text><rect x="933" y="236.8" width="4.5" height="4.7" fill="#000"/><rect x="937.8" y="240.8" width="3.2" height="4" fill="#000"/><rect x="955.3" y="236.8" width="4" height="4.7" fill="#000"/><rect x="960" y="240.8" width="3" height="4" fill="#000"/><rect x="963.7" y="240.8" width="3.4" height="4" fill="#000"/>
<text transform="translate(860.27 280.00) scale(1 0.9)" font-family="Liberation Sans,sans-serif" font-weight="bold" font-size="16.78" fill="#000">=</text><text x="884.06" y="280.07" font-family="Liberation Sans,sans-serif" font-size="16.82" fill="#111">&lt;</text><text x="908.17" y="280.00" font-family="Liberation Sans,sans-serif" font-size="16.62" fill="#111">&gt;</text><text x="932.70" y="279.00" font-family="Liberation Sans,sans-serif" font-size="16.00" fill="#111">≤</text><text x="956.38" y="279.24" font-family="Liberation Sans,sans-serif" font-size="16.80" fill="#111">≥</text><text x="980.02" y="281.29" font-family="Liberation Sans,sans-serif" font-size="19.00" fill="#111">≠</text><text x="859.19" y="299.11" font-family="Liberation Sans,sans-serif" font-size="18.26" fill="#111">¬</text><text transform="translate(883.67 298.73) scale(1 0.82)" font-family="DejaVu Sans Mono,monospace" font-size="16.44" fill="#222">∧</text><text transform="translate(907.52 298.84) scale(1 0.82)" font-family="DejaVu Sans Mono,monospace" font-size="16.91" fill="#222">∨</text><text x="930.03" y="299.41" font-family="DejaVu Sans,sans-serif" font-size="15.70" fill="#111">⊕</text>
<text x="855.05" y="335" font-family="Liberation Serif,serif" font-size="13.33" fill="#000">log</text><text x="878.10" y="335" font-family="Liberation Serif,serif" font-size="13.33" fill="#000">sign</text><text x="905.10" y="335" font-family="Liberation Serif,serif" font-size="13.33" fill="#000">sin</text><text x="928.20" y="335" font-family="Liberation Serif,serif" font-size="13.33" fill="#000">cos</text><text x="858.85" y="355" font-family="Liberation Serif,serif" font-size="13.33" fill="#000">ln</text><text x="880.40" y="355" font-family="Liberation Serif,serif" font-size="13.33" fill="#000">arg</text><text x="904.10" y="355" font-family="Liberation Serif,serif" font-size="13.33" fill="#000">tan</text><text x="928.20" y="355" font-family="Liberation Serif,serif" font-size="13.33" fill="#000">cot</text><text x="855.20" y="375" font-family="Liberation Serif,serif" font-size="13.33" fill="#000" letter-spacing="-0.3">exp</text><text x="957.36" y="334.00" font-family="Liberation Sans,sans-serif" font-weight="bold" font-size="9.60" fill="#000">Σ</text><rect x="959.4" y="324.7" width="2" height="1.6" fill="#000"/><rect x="955" y="335.6" width="2" height="1.4" fill="#000"/><rect x="958" y="335.6" width="1.2" height="1.4" fill="#000"/><rect x="960" y="335.6" width="1.2" height="1.4" fill="#000"/><rect x="962.2" y="335.6" width="1.2" height="1.4" fill="#000"/><rect x="964.4" y="335.6" width="1.6" height="1.4" fill="#000"/><rect x="965" y="329.5" width="1.5" height="2" fill="#000"/><text x="981.18" y="334.00" font-family="Liberation Sans,sans-serif" font-weight="bold" font-size="9.60" fill="#000">Π</text><rect x="983.6" y="324.7" width="2" height="1.6" fill="#000"/><rect x="979" y="335.6" width="2" height="1.4" fill="#000"/><rect x="982" y="335.6" width="1.2" height="1.4" fill="#000"/><rect x="984" y="335.6" width="1.2" height="1.4" fill="#000"/><rect x="986.2" y="335.6" width="1.2" height="1.4" fill="#000"/><rect x="988.4" y="335.6" width="1.6" height="1.4" fill="#000"/><path d="M955.300 350.500H966.700" stroke="#000" stroke-width="1.200"/><rect x="959.8" y="345" width="2" height="4.5" fill="#000"/><rect x="957" y="352.4" width="2.2" height="4.2" fill="#000"/><rect x="960.6" y="352.4" width="4" height="4.2" fill="#000"/><text x="982.25" y="353.58" font-family="DejaVu Sans,sans-serif" font-size="10.46" fill="#111">∫</text><rect x="987.3" y="348.6" width="2" height="3.6" fill="#000"/><rect x="984.2" y="344.2" width="1.6" height="1.5" fill="#000"/><rect x="984.2" y="355.6" width="1.6" height="1.5" fill="#000"/><text x="884.59" y="373.27" font-family="Liberation Sans,sans-serif" font-size="11.41" fill="#111">(</text><rect x="889.8" y="366" width="2.2" height="2.2" fill="#000"/><rect x="889.8" y="369.6" width="2.2" height="2.6" fill="#000"/><rect x="889.8" y="373.4" width="2.2" height="1.6" fill="#000"/>
<path d="M861.500 402.500a5 5 0 1 1 0.300 8.300" fill="none" stroke="#000" stroke-width="1.500"/><path d="M858.800 408.200l4.800 0.400-2.300 3.600z" fill="#000"/><path d="M888.500 399.800l5.500 5.400h-3.800l-0.400 1h-2.600l-0.400-1h-3.800zM887.800 405h1.400v4h-1.400zM888.500 413.400l-3.300-3.400h6.600z" fill="#000"/><path d="M906.500 406.500H918.500M912.500 400.500V412.500M910.300 402.700l2.200-2.200 2.200 2.200M910.300 410.300l2.200 2.200 2.200-2.200M908.700 404.300l-2.200 2.200 2.200 2.200M916.300 404.300l2.200 2.200-2.200 2.200" stroke="#000" fill="none" stroke-width=".9"/><path d="M932 403.500h1M934 403.500h1M936 403.500h1M938 403.500h1M940 403.500h1M942 403.500h1M932 405.500h1M934 405.500h1M936 405.500h1M938 405.500h1M940 405.500h1M942 405.500h1M932 407.500h1M934 407.500h1M936 407.500h1M938 407.500h1M940 407.500h1M942 407.500h1M932 409.500h1M934 409.500h1M936 409.500h1M938 409.500h1M940 409.500h1M942 409.500h1" stroke="#777" shape-rendering="crispEdges"/><path d="M956 403.500H966M956 406.500H966M956 409.500H966" stroke="#000" stroke-width="1.300"/><path d="M980.700 405.200a4.400 4.400 0 0 1 7.600-1.800M989.300 408a4.400 4.400 0 0 1-7.600 1.800" fill="none" stroke="#000" stroke-width="1.300"/><path d="M990.600 401.600v4.600h-4.600zM979.400 411.600v-4.600h4.600z" fill="#000"/>
<text x="860.65" y="447" font-family="Liberation Serif,serif" font-size="13.33" fill="#000">if</text><text x="880.40" y="447" font-family="Liberation Serif,serif" font-size="13.33" fill="#000">for</text><text x="917.90" y="447" font-family="Liberation Serif,serif" font-size="13.33" fill="#000">try</text><text x="963.95" y="447" font-family="Liberation Serif,serif" font-size="13.33" fill="#000">line</text><text x="862.00" y="467" font-family="Liberation Serif,serif" font-size="13.33" fill="#000" letter-spacing="-0.2">while</text><text x="902.10" y="467" font-family="Liberation Serif,serif" font-size="13.33" fill="#000" letter-spacing="-0.2">continue</text><text x="958.30" y="467" font-family="Liberation Serif,serif" font-size="13.33" fill="#000" letter-spacing="-0.2">break</text>
</svg>
<div class="a" style="left:0;top:907px;width:1000px;height:23px;background:#f0f0f0;border-top:1px solid #fafafa"></div>
<div class="t" style="left:3px;top:912px;letter-spacing:-0.35px">Page 2 of 3</div><div class="t" style="left:79px;top:912px;letter-spacing:-0.3px">Ready</div>
<div class="t" style="left:940.5px;top:912px;letter-spacing:-0.45px">100%</div>
<svg width="1000" height="930">
<g fill="none" stroke="#3c3c3c" shape-rendering="crispEdges"><path d="M895.500 912V917.500H906.500V912"/><path d="M898 913.500H903"/><path d="M895.500 928V921.500H904.500L906.500 923.500V928"/><path d="M904.500 921.500V923.500H906.500"/><path d="M898 926.500H903"/></g>
<path d="M911 919.500h5l-2.500 3zM975 919.500h5l-2.500 3z" fill="#000"/>
<circle cx="927.500" cy="917" r="5" fill="#d6ecfb" stroke="#5b9fd8" stroke-width="1.800"/><path d="M931.500 921.500l5 5" stroke="#d8912f" stroke-width="2.800" stroke-linecap="round"/>
<rect x="993" y="917" width="2" height="2" fill="#b4b4b4"/><rect x="993" y="921" width="2" height="2" fill="#b4b4b4"/><rect x="993" y="925" width="2" height="2" fill="#b4b4b4"/><rect x="989" y="921" width="2" height="2" fill="#b4b4b4"/><rect x="989" y="925" width="2" height="2" fill="#b4b4b4"/><rect x="985" y="925" width="2" height="2" fill="#b4b4b4"/>
</svg>
</body></html>
